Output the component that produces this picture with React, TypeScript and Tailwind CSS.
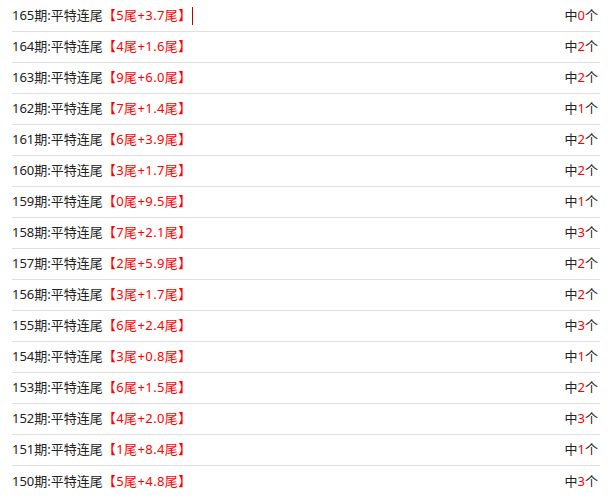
import React from "react";

const rows: [number, string, string, string][] = [
  [165, "5", "3.7", "0"],
  [164, "4", "1.6", "2"],
  [163, "9", "6.0", "2"],
  [162, "7", "1.4", "1"],
  [161, "6", "3.9", "2"],
  [160, "3", "1.7", "2"],
  [159, "0", "9.5", "1"],
  [158, "7", "2.1", "3"],
  [157, "2", "5.9", "2"],
  [156, "3", "1.7", "2"],
  [155, "6", "2.4", "3"],
  [154, "3", "0.8", "1"],
  [153, "6", "1.5", "2"],
  [152, "4", "2.0", "3"],
  [151, "1", "8.4", "1"],
  [150, "5", "4.8", "3"],
];

export default function App() {
  return (
    <div
      className="w-[612px] h-[500px] bg-white overflow-hidden px-3 pt-px text-[13px] text-[#222]"
      style={{ fontFamily: '"Noto Sans", "Noto Sans CJK SC", sans-serif' }}
    >
      {rows.map(([n, a, b, c], i) => (
        <div
          key={n}
          className={`flex items-center justify-between h-[31px] pr-[2px] ${
            i < rows.length - 1 ? "border-b border-[#e0e0e0]" : ""
          }`}
        >
          <div className="flex items-center">
            <span>{n}期:平特连尾</span>
            <span className="text-[#ff0000] tracking-[0.4px]">
              【{a}尾+{b}尾】
            </span>
            {i === 0 && <span className="inline-block w-px h-[18px] bg-[#b00]" />}
          </div>
          <div>
            中<span className="text-[#ff0000]">{c}</span>个
          </div>
        </div>
      ))}
    </div>
  );
}
